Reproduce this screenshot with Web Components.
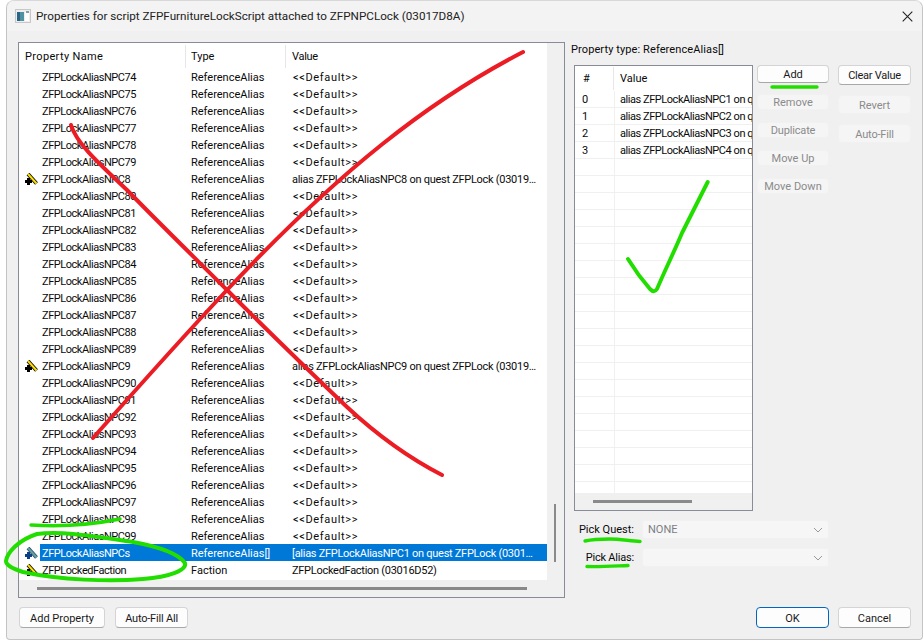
<!DOCTYPE html>
<html><head><meta charset="utf-8">
<style>
html,body{margin:0;padding:0;background:#fff;width:924px;height:641px;overflow:hidden}
body{font:11px/14px Roboto,"Liberation Sans",sans-serif;color:#0a0a0a;position:relative}
</style></head><body>
<x-dialog>
  <span slot="title">Properties for script ZFPFurnitureLockScript attached to ZFPNPCLock (03017D8A)</span>
  <x-prop-table slot="table" id="props"></x-prop-table>
  <x-array-panel slot="side"></x-array-panel>
  <x-btn slot="left" w="86" h="21" low>Add Property</x-btn>
  <x-btn slot="left" w="73" h="21" ls="-.2" low>Auto-Fill All</x-btn>
  <x-btn slot="right" w="73" h="21" primary low>OK</x-btn>
  <x-btn slot="right" w="73" h="21" low>Cancel</x-btn>
</x-dialog>
<x-ink></x-ink>
<script>
const def=(n,html,extra={})=>{customElements.define(n,class extends HTMLElement{
  constructor(){super();this.attachShadow({mode:'open'}).innerHTML=html;}
  connectedCallback(){extra.init&&extra.init.call(this,this.shadowRoot);}
});};
const pencil=(sel)=>`<svg width="14" height="14" viewBox="0 0 14 14">
<path d="M4 1L12.5 10.5" stroke="${sel?'#1f5a78':'#111'}" stroke-width="3.8" fill="none"/>
<path d="M4 1L12.5 10.5" stroke="${sel?'#6f9f9c':'#ffe000'}" stroke-width="1.9" fill="none"/>
<path d="M3 5h3v2h2v3H6v2H3v-2H1V7h2z" fill="${sel?'#0b3f86':'#000'}"/></svg>`;

def('x-dialog',`<style>
:host{display:block;box-sizing:border-box;margin-left:6px;width:917px;height:640px;background:#f0f0f0;border:1px solid #c4c4c4;border-top-color:#d8d8d8;border-radius:8px 8px 4px 4px;overflow:hidden}
.title{height:30px;background:#f3f3f3;display:flex;align-items:center;padding-left:8px;gap:5px;font-size:11.7px;color:#222}
.x{margin-left:auto;margin-right:9px;width:11px;height:11px}
.main{display:grid;grid-template-columns:547px 1fr;grid-template-rows:556px 21px;column-gap:6px;row-gap:9px;padding:11px 0 0 11px}
.l{display:flex;gap:10px;padding-left:1px}
.r{display:flex;gap:9px;padding-left:185px}
</style>
<div class="title"><svg width="16" height="14" viewBox="0 0 16 14"><rect x=".5" y=".5" width="15" height="13" fill="#eeeeee" stroke="#c8c8c8"/><rect x="2" y="3" width="7" height="9" fill="#4f93a0"/><rect x="2" y="3" width="3" height="9" fill="#2c6488"/><rect x="10" y="3" width="4" height="9" fill="#fff"/><rect x="11" y="2" width="3" height="2" fill="#8aa0a8"/></svg>
<slot name="title"></slot><svg class="x" viewBox="0 0 11 11"><path d="M.7.7l9.6 9.6M10.3.7L.7 10.3" stroke="#222" stroke-width="1.1"/></svg></div>
<div class="main"><slot name="table"></slot><slot name="side"></slot>
<div class="l"><slot name="left"></slot></div><div class="r"><slot name="right"></slot></div></div>`);

def('x-btn',`<style>
:host{display:flex;align-items:center;justify-content:center;box-sizing:border-box;background:#fdfdfd;border:1px solid #d4d4d4;border-bottom-color:#a8a8a8;border-radius:4px;color:#1a1a1a;white-space:nowrap;flex:none;padding-top:1px}
:host([low]){padding-top:2px}
:host([disabled]){background:#f5f5f5;border-color:#f1f1f1;color:#8b8b8b}
:host([primary]){border:1.5px solid #0067c0}
</style><slot></slot>`,{init(){this.style.width=this.getAttribute('w')+'px';this.style.height=this.getAttribute('h')+'px';const l=this.getAttribute('ls');if(l)this.style.letterSpacing=l+'px';}});

def('x-combo',`<style>
:host{display:flex;align-items:center;box-sizing:border-box;width:187px;height:19px;background:#f6f6f6;border:1px solid #f1f1f1;border-radius:3px;color:#7d7d85;padding:1px 5px 0}
svg{margin-left:auto}
</style><slot></slot><svg width="10" height="6" viewBox="0 0 10 6"><path d="M1 1l4 4 4-4" fill="none" stroke="#9a9a9a"/></svg>`);

def('x-prop-row',`<style>
:host{display:grid;grid-template-columns:21px 146px 100px 1fr;height:17px;line-height:20px;white-space:nowrap}
.i{display:flex;align-items:center;padding-left:5px;height:17px;position:relative;top:1px}
.c{overflow:hidden;height:17px}
.n{padding-left:2px;letter-spacing:-.45px}.t{padding-left:5px}.v{padding-left:6px;letter-spacing:-.28px}
:host([dflt]) .v{letter-spacing:.65px;padding-left:7px}
:host([selected]) .c{background:#0078d7;color:#fff}
</style><div class="i"></div><div class="c n"></div><div class="c t"></div><div class="c v"></div>`,{init(r){
  r.querySelector('.n').textContent=this.getAttribute('n');
  r.querySelector('.t').textContent=this.getAttribute('t');
  r.querySelector('.v').textContent=this.getAttribute('v');
  if(this.getAttribute('v').startsWith('<<'))this.setAttribute('dflt','');
  if(this.hasAttribute('icon'))r.querySelector('.i').innerHTML=pencil(this.hasAttribute('selected'));
}});

def('x-prop-table',`<style>
:host{display:grid;box-sizing:border-box;width:547px;height:556px;border:1px solid #878c96;background:#f0f0f0;grid-template-columns:528px 16px;grid-template-rows:537px 17px}
.view{background:#fff;overflow:hidden}
.head{display:grid;grid-template-columns:167px 100px 1fr;height:25px;align-items:start}
.head div{height:23px;line-height:24px;padding-left:6px;border-right:1px solid #e6e6e6;margin-top:2px}
.head div:first-child{letter-spacing:.35px}
.head div:nth-child(2){padding-left:5px}.head div:last-child{border:0;padding-left:6px;letter-spacing:-.3px}
.vb{display:flex;justify-content:center;align-items:flex-end}
.vb i{display:block;width:2.5px;height:58px;background:#8a8a8a;margin-bottom:18px}
.hb{display:flex;align-items:center;padding-left:18px}
.hb i{display:block;height:2.5px;width:490px;background:#8a8a8a}
</style><div class="view"><div class="head"><div>Property Name</div><div>Type</div><div>Value</div></div><slot></slot></div><div class="vb"><i></i></div><div class="hb"><i></i></div><div></div>`,{init(){
  const nums=[74,75,76,77,78,79,8];for(let i=80;i<=89;i++)nums.push(i);nums.push(9);for(let i=90;i<=99;i++)nums.push(i);
  const add=(n,t,v,ic,sel)=>{const e=document.createElement('x-prop-row');e.setAttribute('n',n);e.setAttribute('t',t);e.setAttribute('v',v);if(ic)e.setAttribute('icon','');if(sel)e.setAttribute('selected','');this.appendChild(e);};
  nums.forEach(k=>{const set=k==8||k==9;add('ZFPLockAliasNPC'+k,'ReferenceAlias',set?`alias ZFPLockAliasNPC${k} on quest ZFPLock (03019…`:'<<Default>>',set);});
  add('ZFPLockAliasNPCs','ReferenceAlias[]','[alias ZFPLockAliasNPC1 on quest ZFPLock (0301…',true,true);
  add('ZFPLockedFaction','Faction','ZFPLockedFaction (03016D52)',true);
}});

def('x-array-list',`<style>
:host{display:grid;box-sizing:border-box;width:179px;height:446px;border:1px solid #878c96;background:#f0f0f0;grid-template-rows:427px 17px;flex:none}
.view{background:#fff;overflow:hidden}
.head{display:grid;grid-template-columns:39px 1fr;height:25px;align-items:start}
.head div{height:23px;line-height:24px;padding-left:6px;margin-top:1px}
.head div:first-child{border-right:1px solid #e6e6e6;padding-left:8px}
.row{display:grid;grid-template-columns:40px 1fr;height:17px;line-height:18px;white-space:nowrap;box-sizing:border-box;border-bottom:1px solid #f0f0f0}
.row div{overflow:hidden;height:16px}.row div:first-child{padding-left:7px;border-right:1px solid #f0f0f0}.row div:last-child{padding-left:5px;letter-spacing:-.45px}
.hb{display:flex;align-items:center;padding-left:18px}
.hb i{display:block;height:2.5px;width:99px;background:#8a8a8a}
</style><div class="view"><div class="head"><div>#</div><div>Value</div></div><div id="rows"></div></div><div class="hb"><i></i></div>`,{init(r){
  let h='';for(let i=0;i<24;i++)h+=`<div class="row"><div>${i<4?i:''}</div><div>${i<4?`alias ZFPLockAliasNPC${i+1} on q`:''}</div></div>`;
  r.getElementById('rows').innerHTML=h;
}});

def('x-array-panel',`<style>
:host{display:block;width:340px}
.cap{height:14px;line-height:16px;margin-bottom:9px;letter-spacing:.1px}
.top{display:flex;margin-left:3px}
.col{display:flex;flex-direction:column;margin-left:4px;gap:12px;width:72px}
.col2{display:flex;flex-direction:column;margin-left:9px;gap:10px;width:73px}
.col x-btn:first-child{margin-bottom:-1px}
.pick{display:grid;grid-template-columns:63px 187px;column-gap:8px;row-gap:9px;margin-top:9px;align-items:center}
.pick span{text-align:right;line-height:16px}
</style><div class="cap">Property type: ReferenceAlias[]</div>
<div class="top"><x-array-list></x-array-list>
<div class="col"><x-btn w="72" h="18">Add</x-btn><x-btn w="72" h="16" disabled>Remove</x-btn><x-btn w="72" h="16" disabled ls="-.15">Duplicate</x-btn><x-btn w="72" h="16" disabled>Move Up</x-btn><x-btn w="72" h="16" disabled>Move Down</x-btn></div>
<div class="col2"><x-btn w="73" h="20" ls="-.25" low>Clear Value</x-btn><x-btn w="73" h="19" disabled low>Revert</x-btn><x-btn w="73" h="19" disabled ls="-.2" low>Auto-Fill</x-btn></div></div>
<div class="pick"><span>Pick Quest:</span><x-combo>NONE</x-combo><span style="letter-spacing:-.2px">Pick Alias:</span><x-combo></x-combo></div>`);

def('x-ink',`<style>
:host{position:absolute;left:0;top:0;width:924px;height:641px;pointer-events:none}
svg{display:block}
path{fill:none;stroke-linecap:round;stroke-linejoin:round}
.r{stroke:#ec1c24;stroke-width:4}.g{stroke:#22de00;stroke-width:3.4}.e{stroke-width:4}.c{stroke-width:3.9}
</style><svg width="924" height="641" viewBox="0 0 924 641">
<path class="r" d="M523 52C430 100 340 170 227 290C180 340 140 385 93 438"/>
<path class="r" d="M71 125C76 142 95 160 127 190C160 224 195 258 227 290C265 328 305 367 347 407C375 433 405 456 442 475"/>
<path class="g" d="M31 525C60 527 90 525 120 519"/>
<path class="g e" d="M37 534C60 531 85 535 133 542C155 546 178 553 185 563C187 570 170 577 143 579C110 582 60 580 23 572C11 568 6 565 6 561C7 553 18 540 37 534"/>
<path class="g" d="M772 87H817"/>
<path class="g" d="M585 541C594 539 602 539 610 539C620 539 630 541 640 541.5"/>
<path class="g" d="M587 566.5C600 567 615 566 628 565.5"/>
<path class="g c" d="M707.7 182L682 233C675 250 665 270 657 289C655 292 653 292 650 289C643 281 636 272 628 259"/>
</svg>`);
</script>
</body></html>
